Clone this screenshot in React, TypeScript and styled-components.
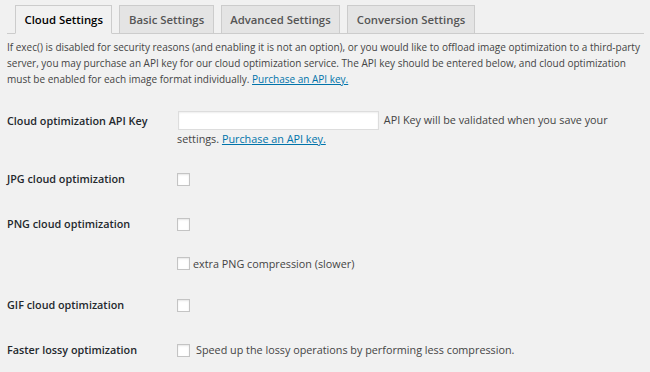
import React from "react";
import { styled, createGlobalStyle } from "styled-components";

const GlobalStyle = createGlobalStyle`
  html, body {
    margin: 0;
    padding: 0;
    background: #f1f1f1;
  }
  body {
    font-family: "Open Sans", "Liberation Sans", sans-serif;
    font-size: 10.8px;
    color: #444;
  }
`;

/**
 * Settings page with tabs and a form table.
 */
export default function App() {
  const tabs = ["Cloud Settings", "Basic Settings", "Advanced Settings", "Conversion Settings"];

  return (
    <>
      <GlobalStyle />
      <Wrap>
        <TabBar>
          {tabs.map((t, i) => (
            <Tab key={t} $active={i === 0}>{t}</Tab>
          ))}
        </TabBar>

        <Intro>
          If exec() is disabled for security reasons (and enabling it is not an option), or you would like to
          offload image optimization to a third-party server, you may purchase an API key for our cloud
          optimization service. The API key should be entered below, and cloud optimization must be enabled for
          each image format individually. <Link href="#">Purchase an API key.</Link>
        </Intro>

        <FormTable>
          <Row $top="14.5px" $bottom="9.5px">
            <Label $offset="2px">Cloud optimization API Key</Label>
            <Field $lh="17px">
              <TextInput type="text" /> API Key will be validated when you save your settings.{" "}
              <Link href="#">Purchase an API key.</Link>
            </Field>
          </Row>

          <Row>
            <Label>JPG cloud optimization</Label>
            <Field><Checkbox /></Field>
          </Row>

          <Row>
            <Label>PNG cloud optimization</Label>
            <Field><Checkbox /></Field>
          </Row>

          <Row $top="9px" $bottom="11px">
            <Label />
            <Field>
              <Option $gap="3px"><Checkbox />extra PNG compression (slower)</Option>
            </Field>
          </Row>

          <Row>
            <Label>GIF cloud optimization</Label>
            <Field><Checkbox /></Field>
          </Row>

          <Row>
            <Label>Faster lossy optimization</Label>
            <Field>
              <Option $gap="6px"><Checkbox />Speed up the lossy operations by performing less compression.</Option>
            </Field>
          </Row>
        </FormTable>
      </Wrap>
    </>
  );
}

const Wrap = styled.div`
  padding: 0 6px 0 7px;
`;

const TabBar = styled.div`
  display: flex;
  gap: 7px;
  padding: 5px 0 0 8px;
  border-bottom: 1px solid #ccc;
`;

const Tab = styled.div<{ $active: boolean }>`
  height: 27px;
  line-height: 27px;
  padding: 0 8.5px;
  margin-bottom: -1px;
  border: 1px solid #ccc;
  border-bottom: ${$ => ($.$active ? "1px solid #f1f1f1" : "1px solid #ccc")};
  background: ${$ => ($.$active ? "#f1f1f1" : "#e4e4e4")};
  color: ${$ => ($.$active ? "#000" : "#555")};
  font-size: 11.35px;
  font-weight: 600;
  white-space: nowrap;
`;

const Intro = styled.p`
  margin: 5px 0 9px;
  font-size: 10px;
  line-height: 16px;
  color: #444;
`;

const Link = styled.a`
  color: #0073aa;
  text-decoration: underline;
`;

const FormTable = styled.div`
  display: flex;
  flex-direction: column;
`;

const Row = styled.div<{ $top?: string; $bottom?: string }>`
  display: grid;
  grid-template-columns: 170px 1fr;
  align-items: start;
  padding-top: ${$ => $.$top ?? "14.5px"};
  padding-bottom: ${$ => $.$bottom ?? "14.5px"};
`;

const Label = styled.div<{ $offset?: string }>`
  font-weight: 600;
  color: #23282d;
  line-height: 16px;
  padding-top: ${$ => $.$offset ?? "0"};
`;

const Field = styled.div<{ $lh?: string }>`
  line-height: ${$ => $.$lh ?? "16px"};
  min-height: 16px;
  display: ${$ => ($.$lh ? "block" : "flex")};
  align-items: center;
  color: #444;
`;

const TextInput = styled.input`
  box-sizing: border-box;
  width: 201px;
  height: 19px;
  margin: 0 2px 0 1px;
  padding: 0 4px;
  border: 1px solid #ddd;
  background: #fff;
  box-shadow: inset 0 1px 2px rgba(0, 0, 0, 0.07);
  vertical-align: middle;
  font: inherit;
  outline: none;
`;

const Checkbox = styled.span`
  display: block;
  flex: none;
  box-sizing: border-box;
  width: 13px;
  height: 13px;
  border: 1px solid #c4c4c4;
  background: #fff;
  box-shadow: inset 0 1px 2px rgba(0, 0, 0, 0.1);
`;

const Option = styled.label<{ $gap: string }>`
  display: flex;
  align-items: center;
  gap: ${$ => $.$gap};
  line-height: 16px;
`;
